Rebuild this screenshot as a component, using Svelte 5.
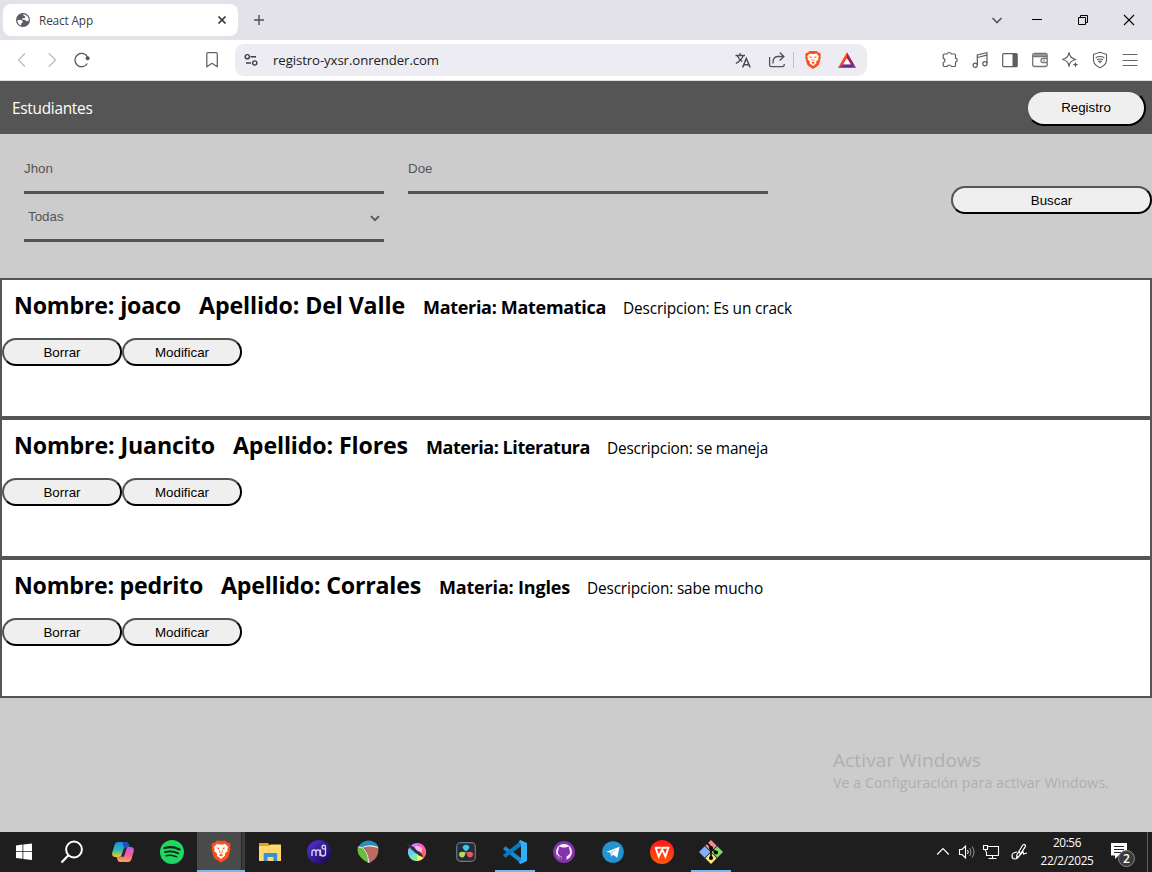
<script>
  const students = [
    { nombre: ['joaco', 167], apellido: ['Del Valle', 206], materia: ['Matematica', 183], descripcion: ['Es un crack', 169] },
    { nombre: ['Juancito', 201], apellido: ['Flores', 175], materia: ['Literatura', 164], descripcion: ['se maneja', 161] },
    { nombre: ['pedrito', 189], apellido: ['Corrales', 200], materia: ['Ingles', 131], descripcion: ['sabe mucho', 176] }
  ];

  // Spreads letters so a line of text fills the given width.
  function fit(node, width) {
    const natural = node.getBoundingClientRect().width;
    node.style.letterSpacing = `${(width - natural) / node.textContent.length}px`;
  }
</script>

{#snippet lion()}
  <path d="M7.500 2h9l2 2.200 1.800-.2 1.400 2.500-.8 1.700.6 1.800-2 7.600q-.5 1.600-2 2.700L12 23.800l-5.500-3.500q-1.500-1.100-2-2.700L2.500 10l.6-1.800-.8-1.700L3.700 4l1.800.2z" fill="#ff4f14"/>
  <path d="M8 5l2.200.6h3.600L16 5l3.200 3.500-.9 1.800.4 1.700-3 3.200.5 1.700-1.900 1.400L12 20.200l-2.300-1.900-1.900-1.400.5-1.700-3-3.200.4-1.700-.9-1.800z" fill="#fff"/>
  <path d="M7.300 8.700l3.300.3-.8 1.800zM16.700 8.700l-3.300.3.800 1.800zM9.800 16.300l2.200-1.200 2.200 1.200L12 17.700z" fill="#ff4f14"/>
  <path d="M10.900 11.300l-.5 2.200 1.600.8 1.600-.8-.5-2.200" fill="none" stroke="#ff4f14" stroke-width=".7"/>
{/snippet}

<div class="screen">
  <div class="tabs">
    <div class="tab">
      <svg class="favicon" width="16" height="16" viewBox="0 0 16 16"><circle cx="8" cy="8" r="7" fill="#5a5d61"/><path d="M2.400 8.200Q5.200 7.200 7 8.400t.2 2.400l-1 .7-.1 2.100Q2.700 12.400 2.400 8.200zM8.300 2.200q-.3 1.700 1 1.800 1.200.2.800 1.400-.6 1.100-1.800.8-1.500-.2-1.300 1 .6.800 2 .6 2 .1 2.100 1.300l2.100.1q1-1.600.3-3.300Q12.200 2.700 8.300 2.200z" fill="#fff"/></svg>
      <span class="tab-title"><span use:fit={54}>React App</span></span>
      <svg class="tab-close" width="10" height="10" viewBox="0 0 10 10"><path d="M1.500 1.500l7 7m0-7l-7 7" stroke="#333438" stroke-width="1.700"/></svg>
    </div>
    <svg class="plus" width="12" height="12" viewBox="0 0 12 12"><path d="M6 1v10M1 6h10" stroke="#505257" stroke-width="1.400"/></svg>
    <div class="win">
      <svg class="chev" width="34" height="24" viewBox="0 0 34 24"><path d="M12.500 10l4.500 4.500 4.500-4.500" fill="none" stroke="#55585d" stroke-width="1.700"/></svg>
      <svg width="46" height="24" viewBox="0 0 46 24"><path d="M18 11.500h10" stroke="#000" stroke-width="1"/></svg>
      <svg width="46" height="24" viewBox="0 0 46 24"><path d="M18.500 9.500h7v7h-7zM20.500 9V7.500h7v7H26" fill="none" stroke="#000"/></svg>
      <svg width="46" height="24" viewBox="0 0 46 24"><path d="M18 7l10 10m0-10L18 17" stroke="#000" stroke-width="1.100"/></svg>
    </div>
  </div>

  <div class="toolbar">
    <div class="nav">
      <svg viewBox="0 0 24 24"><path d="M15 5.500L8.500 12l6.500 6.500" fill="none" stroke="#b9babd" stroke-width="1.200"/></svg>
      <svg viewBox="0 0 24 24"><path d="M9 5.500l6.500 6.500L9 18.500" fill="none" stroke="#b9babd" stroke-width="1.200"/></svg>
      <svg viewBox="0 0 24 24"><path d="M17.400 15.500A6.700 6.700 0 1 1 17.800 9.500" fill="none" stroke="#55585d" stroke-width="1.300"/><circle cx="17.600" cy="10.200" r="2" fill="#55585d"/></svg>
    </div>
    <svg class="bookmark" viewBox="0 0 24 24"><path d="M8 4.700h8q1.300 0 1.300 1.300v12.800l-5.200-3.500-5.300 3.500V6q0-1.300 1.200-1.300z" fill="none" stroke="#64666b" stroke-width="1.300" stroke-linejoin="round"/></svg>
    <div class="address">
      <svg class="site" viewBox="0 0 24 24"><g fill="none" stroke="#3e4045" stroke-width="1.400"><circle cx="8.300" cy="8.700" r="2.100"/><path d="M11.500 8.700h5.500M7 15h5"/><circle cx="15.700" cy="15" r="2.100"/></g></svg>
      <span class="url"><span use:fit={166}>registro-yxsr.onrender.com</span></span>
      <svg viewBox="0 0 24 24"><g fill="none" stroke="#494b50" stroke-width="1.300"><path d="M4.500 7.500H14M9.200 5v2.500M12.200 7.800Q10.500 12.500 4.800 15.500M6.500 8Q8 11.500 11.300 13.500"/><path d="M11.600 19.500L15.300 10.500l3.900 9M12.700 16.700h5.200" stroke-width="1.500"/></g></svg>
      <svg class="share" viewBox="0 0 24 24"><g fill="none" stroke="#505257" stroke-width="1.300"><path d="M4.600 9v8q0 1.700 1.700 1.700h11.200q1.700 0 1.700-1.700v-1"/><path d="M8 15.500V13.500q.5-5 5-5h5.500M14.700 4.500l4.200 4-4.200 4"/></g></svg>
      <i class="divider"></i>
      <svg class="shield" viewBox="0 0 24 24"><g transform="translate(2.200 1.400) scale(.82)">{@render lion()}</g></svg>
      <svg class="bat" viewBox="0 0 24 24"><path d="M12 4.200L3 19.700l5.400-3.500L12 10.200z" fill="#ff4724"/><path d="M12 4.200l9 15.500-5.400-3.500L12 10.200z" fill="#9e1f63"/><path d="M3 19.700h18l-5.200-3.500H8.200z" fill="#662d91"/><path d="M12 10.200l3.600 6H8.400z" fill="#fff"/></svg>
    </div>
    <div class="actions">
      <svg viewBox="0 0 24 24"><path d="M6.500 6h2.600q.2-1.500 2.100-1.500T13.300 6h3.200q1 0 1 1v3.200q1.700.2 1.700 2t-1.700 2v3.300q0 1-1 1h-3.200q-.3-1.500-2-1.500t-2.100 1.500H6.500q-1.300 0-1.300-1v-3q1.800-.3 1.800-2.100T5.200 10.300V7q0-1 1.300-1z" fill="none" stroke="#5b5e63" stroke-width="1.200" stroke-linejoin="round"/></svg>
      <svg viewBox="0 0 24 24"><g fill="none" stroke="#5b5e63" stroke-width="1.200"><path d="M9.300 17V7l9.700-2.300v10.600M9.300 9.500L19 7.200"/><circle cx="7.200" cy="17.200" r="2.100"/><circle cx="16.900" cy="15.700" r="2.100"/></g></svg>
      <svg viewBox="0 0 24 24"><rect x="4.700" y="5.700" width="14.500" height="13" rx="1" fill="none" stroke="#5b5e63" stroke-width="1.200"/><path d="M14.500 6H19v12.500h-4.500z" fill="#5b5e63"/></svg>
      <svg viewBox="0 0 24 24"><path d="M6 5.200h10.500q2 0 2.300 3H5z" fill="#a0a1a4"/><g fill="none" stroke="#74767a" stroke-width="1.300"><rect x="4.700" y="5.500" width="14.500" height="13" rx="2"/><path d="M5 8.500h14M19 10.500h-4q-2 0-2 2t2 2h4M15.500 12.500h1"/></g></svg>
      <svg viewBox="0 0 24 24"><path d="M11 4.700q.8 5.500 6.700 6.800-6 1.100-6.700 6.800-.8-5.700-6.500-6.800 5.700-1.200 6.500-6.800z" fill="none" stroke="#5b5e63" stroke-width="1.200" stroke-linejoin="round"/><path d="M17.500 14l.8 1.800 2 .8-2 .8-.8 2.100-.8-2.100-2-.8 2-.8z" fill="#5b5e63"/></svg>
      <svg viewBox="0 0 24 24"><g fill="none" stroke="#5b5e63" stroke-width="1.100"><path d="M12 4.300l6.500 2v6q0 4.500-6.500 7.400-6.500-2.900-6.500-7.400v-6zM7.700 9.700q4.300-2.400 8.600 0M9 11.700q3-1.500 6 0M10.200 13.500q1.800-.8 3.600 0"/></g><circle cx="12" cy="14.500" r=".8" fill="#5b5e63"/></svg>
      <svg viewBox="0 0 24 24"><path d="M4.500 6.500h15M4.500 12.500h15M4.500 17.500h15" stroke="#65676c" stroke-width="1.200"/></svg>
    </div>
  </div>

  <header>
    <span class="brand"><span use:fit={80.5}>Estudiantes</span></span>
    <button class="pill register">Registro</button>
  </header>

  <main>
    <section class="filters">
      <div class="fields">
        <div class="field">Jhon</div>
        <div class="field">Doe</div>
        <div class="field select">Todas
          <svg width="10" height="7" viewBox="0 0 10 7"><path d="M1 1.200l4 4 4-4" fill="none" stroke="#555" stroke-width="1.800"/></svg>
        </div>
      </div>
      <button class="pill search">Buscar</button>
    </section>

    {#each students as s}
      <article>
        <div class="info">
          <h2><span use:fit={s.nombre[1]}>Nombre: {s.nombre[0]}</span></h2>
          <h2><span use:fit={s.apellido[1]}>Apellido: {s.apellido[0]}</span></h2>
          <h3><span use:fit={s.materia[1]}>Materia: {s.materia[0]}</span></h3>
          <p><span use:fit={s.descripcion[1]}>Descripcion: {s.descripcion[0]}</span></p>
        </div>
        <div class="buttons">
          <button class="pill">Borrar</button>
          <button class="pill">Modificar</button>
        </div>
      </article>
    {/each}
  </main>

  <div class="watermark">
    <div class="wm-title"><span use:fit={148}>Activar Windows</span></div>
    <div class="wm-text"><span use:fit={276}>Ve a Configuración para activar Windows.</span></div>
  </div>

  <footer>
    <div class="sys"><svg viewBox="0 0 28 28"><path d="M6 7.500l6.500-.9v6.700H6zM13.300 6.500L22 5.500v7.800h-8.700zM6 14.100h6.500v6.700L6 19.900zM13.300 14.100H22V22l-8.700-1.100z" fill="#fff"/></svg></div>
    <div class="sys"><svg viewBox="0 0 28 28"><circle cx="16" cy="11.500" r="7.900" fill="none" stroke="#fff" stroke-width="2"/><path d="M10.500 17.300L3.500 24.500" stroke="#fff" stroke-width="2.200"/></svg></div>
    <div class="apps">
      <div class="app">
        <svg viewBox="0 0 28 28">
          <defs><linearGradient id="cpa" x2="0" y2="1"><stop offset="0" stop-color="#168fe8"/><stop offset=".55" stop-color="#36b7b0"/><stop offset="1" stop-color="#f4cf1c"/></linearGradient><linearGradient id="cpb" x2="0" y2="1"><stop offset="0" stop-color="#b463ed"/><stop offset=".5" stop-color="#f15e91"/><stop offset="1" stop-color="#ffa653"/></linearGradient></defs>
          <path d="M9 4h8q2 0 2.700 2.500l.7 2.500h-3q-2.200 0-3 2.500l-1.700 5.500q-.8 2-3 2H6.500Q2.500 19 3.200 14.700L5.500 7Q6.300 4 9 4z" fill="url(#cpa)"/><path d="M13.500 4H17q2 0 2.700 2.500l.7 2.500h-3q-1.700 0-2.600 1.500z" fill="#2050bd"/>
          <path d="M19 24h-8q-2 0-2.700-2.500L7.600 19h2.700q2 0 2.700-2.200l2-5.800q.8-2 3-2h3.200q4.300 0 3.600 4.200L22.500 21Q21.500 24 19 24z" fill="url(#cpb)"/><path d="M15 11l-2.700 7.300q.8.700 1.600.7.900 0 1.300-1.200l2.200-6.500q.3-1.300 1.300-2.300-2.800 0-3.700 2z" fill="#252331"/>
        </svg>
      </div>
      <div class="app"><svg viewBox="0 0 28 28"><circle cx="14" cy="14" r="12" fill="#1ed760"/><g fill="none" stroke="#17231b" stroke-linecap="round"><path d="M6.500 10q8-2.200 15 1.400" stroke-width="2.300"/><path d="M7.200 14q7-1.700 13 1.300" stroke-width="1.900"/><path d="M8 17.700q6-1.300 10.700 1.200" stroke-width="1.500"/></g></svg></div>
      <div class="app current"><svg viewBox="0 0 28 28"><g transform="translate(2 .8)">{@render lion()}</g></svg></div>
      <div class="app">
        <svg viewBox="0 0 28 28"><path d="M3 5h9l1.500 2H25v16H3z" fill="#e6a012"/><path d="M3 8h10l1.500-1.500H25V23H3z" fill="#ffd76c"/><path d="M8.500 15h12q.7 0 .7.700V23h-3.700v-4h-6v4H7.700v-7.300q0-.7.800-.7z" fill="#348fda"/></svg>
      </div>
      <div class="app">
        <svg viewBox="0 0 28 28"><defs><linearGradient id="ms" x2="1" y2="1"><stop stop-color="#5932dc"/><stop offset="1" stop-color="#140648"/></linearGradient></defs><circle cx="14" cy="14" r="12" fill="url(#ms)"/><path d="M7 18v-4q0-2 2-2t2 2v4m0-4q0-2 2-2t2 2v4M15.500 11.500v4q0 2.500 2.500 2.500t2.500-2.500V9.500q0-2.200-1.700-2.200T17.100 9.300q0 1.700 1.700 1.700h1.700" fill="none" stroke="#d8d0ee" stroke-width="1.400"/></svg>
      </div>
      <div class="app">
        <svg viewBox="0 0 28 28"><path d="M5 8Q8 3 14.500 2.500 21.500 3 24 8l.3 3-8-.8L5 9z" fill="#268fc4"/><path d="M4 9q5 0 7.800 5.500 2.600 5 2.500 10.500Q3.800 19.500 3.500 12z" fill="#69bd3d"/><path d="M10 9q7-2.700 14.300.5 1 7-3.800 12-3 2.500-5.600 3.500.2-9-4.900-16z" fill="#b86c62"/><path d="M4 9q9-1 10.900 16M9 9.300q7-3 15 .2" fill="none" stroke="#f5e9dc" stroke-width="1.100"/></svg>
      </div>
      <div class="app">
        <svg viewBox="0 0 28 28"><circle cx="14" cy="14" r="9" fill="#dd7aff"/><path d="M14 14V5a9 9 0 0 1 8.500 6z" fill="#ff58c7"/><path d="M14 14l8.500-3a9 9 0 0 1-2.300 9.500z" fill="#ff675e"/><path d="M14 14l6.200 6.500A9 9 0 0 1 14 23z" fill="#fff25b"/><path d="M14 14v9a9 9 0 0 1-7.800-4.500z" fill="#79edab"/><path d="M14 14l-7.800 4.500A9 9 0 0 1 5.500 11z" fill="#54d7f5"/><circle cx="15" cy="12" r="4" fill="#ffdcf3" opacity=".7"/><path d="M3 5l8 4 4.500 5-2 2L8 11zM13 14.500l2-1.500q4 1.300 5 6-5-1-7-4.500z" fill="#313341"/></svg>
      </div>
      <div class="app">
        <svg viewBox="0 0 28 28"><defs><linearGradient id="dr" x2="1" y2="1"><stop stop-color="#3b8792"/><stop offset=".55" stop-color="#887a63"/><stop offset="1" stop-color="#b94958"/></linearGradient></defs><rect x="4.700" y="4.700" width="18.600" height="18.600" rx="4" fill="#202d3e" stroke="url(#dr)" stroke-width="1.200"/><path d="M14 13.500Q8.800 9.500 11.500 7.700q2.500-1.800 5 0Q19.200 9.500 14 13.500z" fill="#47c5e4"/><path d="M14.300 14.200q6.200-1.500 6.700 1.800 0 3-2.800 3.500-3 .2-3.900-5.300z" fill="#ee5a51"/><path d="M13.700 14.200Q7.500 12.700 7 16q0 3 2.800 3.500 3 .2 3.900-5.300z" fill="#bdd75e"/></svg>
      </div>
      <div class="app open">
        <svg viewBox="0 0 28 28"><path d="M4.500 8.200L20 20v5.500L2 11z" fill="#168bd4"/><path d="M4.500 19.800L20 8V2.500L2 17z" fill="#0879bb"/><path d="M19.500 2L26 5v18l-6.500 3-1.800-1.200L20 22V6l-2.300-2.500z" fill="#32aff4"/></svg>
      </div>
      <div class="app">
        <svg viewBox="0 0 28 28"><circle cx="14" cy="14" r="11" fill="#8532a8"/><circle cx="14" cy="14" r="8" fill="#f6edf9"/><path d="M11 22v-3q-3 .7-4-2M9.500 9l3 1h3l3-1 .5 3q1.300 2 0 4-1 1.600-3 2V22h-4v-4q-3 0-3.500-3-.4-1.800.5-3z" fill="#8532a8" stroke="#8532a8"/></svg>
      </div>
      <div class="app"><svg viewBox="0 0 28 28"><circle cx="14" cy="14" r="10.800" fill="#2493cf"/><path d="M7 14l13.500-5.300-2.200 11-4.200-3-1.900 2-1-4.200z" fill="#fff"/><path d="M11.300 14.500l7-4.300-5 5-1 3.300z" fill="#b8d7ea"/></svg></div>
      <div class="app"><svg viewBox="0 0 28 28"><defs><linearGradient id="wps" x2="0" y2="1"><stop stop-color="#ff1717"/><stop offset="1" stop-color="#ff590c"/></linearGradient></defs><circle cx="14" cy="14" r="12" fill="url(#wps)"/><path d="M6.800 9.800h6.500M7.700 10l3 8.500 3.500-7 3.200 7 3-8.700h-6.600" fill="none" stroke="#fff" stroke-width="1.900"/></svg></div>
      <div class="app open">
        <svg viewBox="0 0 28 28"><path d="M14 2l5.700 5.700L14 13.400 8.300 7.700z" fill="#f58d8c"/><path d="M20.300 8.300L26 14l-5.700 5.700-5.700-5.700z" fill="#80dc68"/><path d="M14 14.600l5.700 5.700L14 26l-5.700-5.700z" fill="#ffe57c"/><path d="M7.700 8.300l5.700 5.700-5.700 5.700L2 14z" fill="#80b1fb"/><path d="M14 21V9l-4-4m4 5l5 4.500" fill="none" stroke="#161616" stroke-width="1.800"/><circle cx="14" cy="10" r="2.100"/><circle cx="14" cy="20" r="2.100"/><circle cx="19" cy="14.500" r="2.100"/></svg>
      </div>
    </div>
    <div class="tray">
      <svg viewBox="0 0 24 24"><path d="M6.200 14.500l5.800-5.800 5.800 5.800" fill="none" stroke="#fff" stroke-width="1.200"/></svg>
      <svg viewBox="0 0 24 24"><path d="M4.500 9.500h2.500l3.500-3.500v12L7 14.500H4.500z" fill="none" stroke="#fff" stroke-width="1.100"/><path d="M12.500 10q1.500 2 0 4" fill="none" stroke="#fff"/><path d="M14.700 8q2.700 4 0 8M17 6.500q4 5.500 0 11" fill="none" stroke="#999"/></svg>
      <svg viewBox="0 0 24 24"><path d="M9 6.500h10.500v9H7.500v-4M13.500 15.500v3M9.500 18.500h8M4.500 5.500h4v4h-4zM6.500 9.500v2" fill="none" stroke="#fff" stroke-width="1.100"/></svg>
      <svg class="pen" viewBox="0 0 24 24"><path d="M10 14.500l5.500-9q1.200-1.700 2.400-.8 1.100.8.100 2.500l-6 9-2.500 1.600zM10 12q-5 .5-5 4 0 3 3 3 2.700 0 4.500-3.500l3.500-4 .5 2.500 3.500-1M12 11l1 2.500" fill="none" stroke="#fff" stroke-width="1.200"/></svg>
    </div>
    <div class="clock"><div><span use:fit={28}>20:56</span></div><div><span use:fit={53}>22/2/2025</span></div></div>
    <div class="notice">
      <svg width="17" height="18" viewBox="0 0 17 18"><path d="M0 0h16v12.500H7.500L4 16v-3.500H0z" fill="#fff"/><path d="M3 3.500h10M3 6.500h10M3 9.500h7" stroke="#242424"/></svg>
      <span class="badge">2</span>
    </div>
    <i class="desktop"></i>
  </footer>
</div>

<style>
  :global(body) { margin: 0; overflow: hidden; }
  * { box-sizing: border-box; }
  svg { display: block; flex: none; }
  span { white-space: nowrap; }
  .screen { position: relative; width: 1152px; height: 872px; display: flex; flex-direction: column; overflow: hidden; background: #ccc; font-family: "Open Sans", "Noto Sans", sans-serif; }
  .tabs { height: 40px; background: #e3e2e8; display: flex; align-items: center; padding-left: 3px; }
  .tab { width: 235px; height: 32px; border-radius: 8px; background: #fff; display: flex; align-items: center; padding: 0 11px 0 12px; }
  .tab-title { margin-left: 8px; flex: 1; font-size: 11.800px; line-height: 16px; color: #3d3f43; }
  .plus { margin-left: 15px; }
  .win { margin-left: auto; display: flex; }
  .toolbar { height: 41px; background: #fff; border-bottom: 1px solid #dcdfe3; display: flex; align-items: center; padding-left: 7px; }
  .toolbar svg { width: 24px; height: 24px; }
  .nav { display: flex; width: 193px; }
  .nav svg, .actions svg { margin: 0 3px; }
  .address { width: 632px; height: 32px; margin-left: 11px; border-radius: 9px; background: #edecf2; display: flex; align-items: center; padding: 0 8px 0 4px; }
  .url { flex: 1; margin-left: 10px; font-size: 13.200px; line-height: 18px; color: #202124; }
  .share { margin-left: 10px; }
  .divider { width: 1px; height: 16px; background: #c1c2c8; margin: 0 7px 0 4px; }
  .bat { margin-left: 10px; }
  .actions { display: flex; margin-left: 68px; }
  header { height: 53px; background: #555; color: #fff; display: flex; align-items: center; justify-content: space-between; padding: 0 6px 0 12px; }
  .brand { font-size: 15.400px; line-height: 22px; padding-top: 3px; }
  .pill { width: 120px; height: 28px; padding: 0; border: 2px solid; border-color: #555 #000 #000 #555; border-radius: 20px; background: #efefef; color: #000; font: 13.333px "Liberation Sans", Arial, sans-serif; }
  .register { height: 36px; padding-bottom: 1px; }
  .filters { height: 144px; display: flex; align-items: flex-start; justify-content: space-between; }
  .fields { padding: 12px 0 0 24px; display: grid; grid-template-columns: 360px 360px; column-gap: 24px; }
  .field { height: 48px; border-bottom: 3px solid #555; font: 13.333px/16px "Liberation Sans", Arial, sans-serif; color: #555; padding-top: 15px; }
  .select { display: flex; justify-content: space-between; padding: 15px 4px 0; }
  .select svg { margin-top: 6px; }
  .search { width: 201px; margin-top: 52px; }
  article { height: 140px; border: 2px solid #555; background: #fff; color: #000; }
  .info { height: 58px; display: flex; align-items: baseline; gap: 18px; padding: 9px 0 0 12px; }
  h2, h3, p { margin: 0; font-weight: 700; line-height: 32px; }
  h2 { font-size: 23.200px; }
  h3 { font-size: 18px; }
  h3 + p { margin-left: -1px; }
  p { font-size: 15.400px; font-weight: 400; }
  .buttons { display: flex; }
  .watermark { position: absolute; left: 833px; top: 747px; color: #afafaf; }
  .wm-title { font-size: 19px; line-height: 26px; }
  .wm-text { font-size: 14.200px; line-height: 19px; }
  footer { height: 40px; margin-top: auto; background: #1e1e1e; display: flex; color: #fff; }
  .sys { width: 48px; display: flex; align-items: center; justify-content: center; }
  footer .sys svg, .app svg { width: 28px; height: 28px; }
  .apps { display: flex; padding-left: 2px; }
  .app { width: 49px; display: flex; align-items: center; justify-content: center; }
  .current { width: 48px; margin-left: 1px; background: linear-gradient(#76b9ed, #76b9ed) left bottom / 100% 2px no-repeat, linear-gradient(90deg, #4a4a4a 44px, #262626 44px, #262626 45px, #3c3c3c 45px); }
  .open { background: linear-gradient(#76b9ed, #76b9ed) center bottom / 40px 2px no-repeat; }
  .tray { margin-left: auto; display: flex; align-items: center; }
  .tray svg { width: 24px; height: 24px; }
  .tray .pen { margin-left: 4px; }
  .clock { width: 72px; display: flex; flex-direction: column; align-items: center; font-size: 11.800px; line-height: 18px; padding-top: 1px; }
  .notice { position: relative; width: 44px; padding: 11px 0 0 8px; }
  .badge { position: absolute; left: 15px; top: 18px; width: 17px; height: 17px; border: 1px solid #8b8b8b; border-radius: 50%; background: #3b3b3b; font-size: 12px; font-weight: 600; line-height: 15px; text-align: center; }
  .desktop { width: 5px; border-left: 1px solid #5d5d5d; }
</style>
